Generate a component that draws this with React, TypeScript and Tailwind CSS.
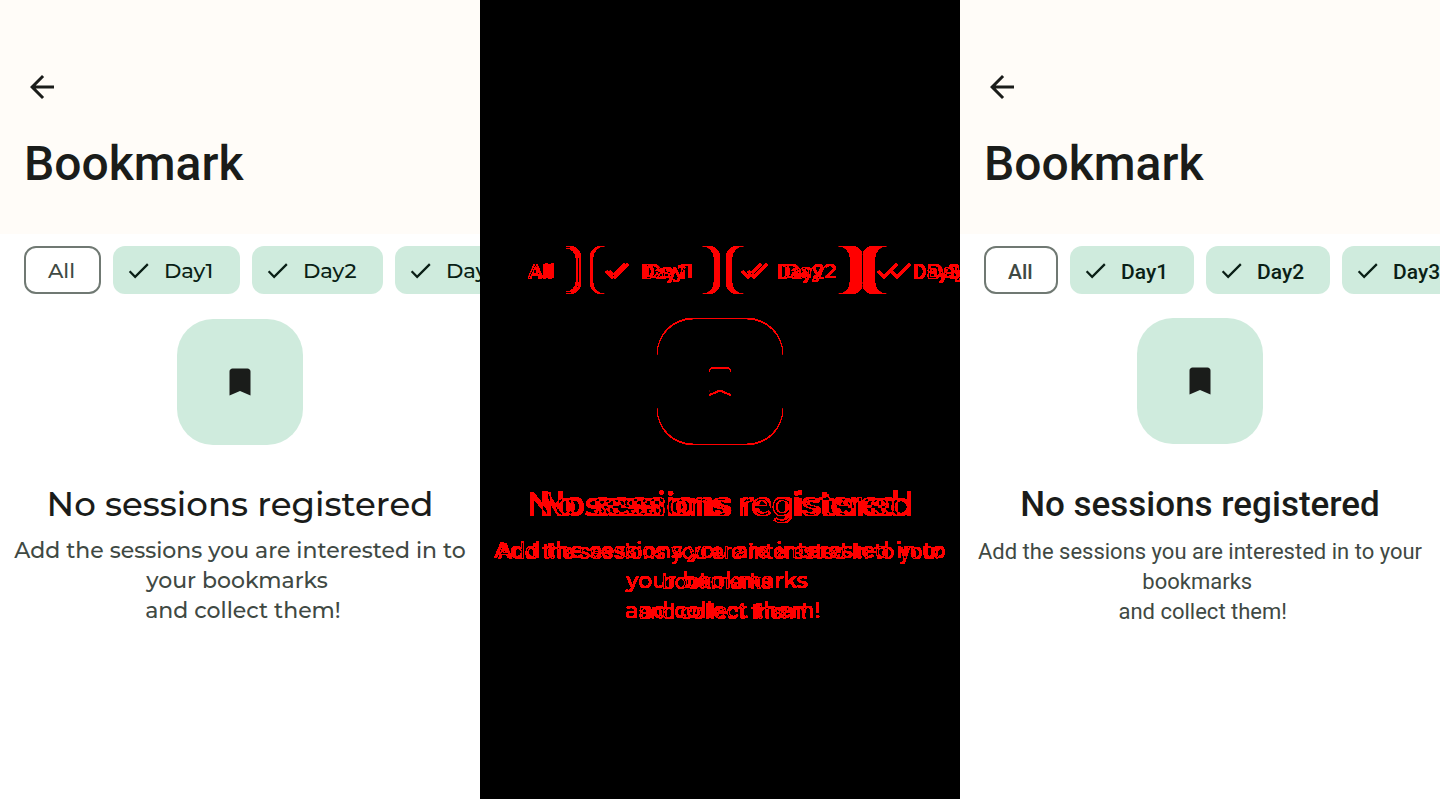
type Variant = "baseline" | "updated";

type ScreenStyle = {
  font: string;
  chipText: string;
  chipLabel: string;
  allChip: string;
  dayChips: string[];
  badgeMargin: string;
  heading: string;
  body: string;
  lines: string[];
};

const screens: Record<Variant, ScreenStyle> = {
  baseline: {
    font: "font-['Montserrat','Inter',sans-serif]",
    chipText: "text-[21px] font-medium",
    chipLabel: "pt-px",
    allChip: "min-w-[77px]",
    dayChips: ["min-w-[127px]", "min-w-[131px]", "min-w-[131px]"],
    badgeMargin: "mt-[25px] mb-[38px]",
    heading: "text-[34px] font-medium",
    body: "mt-[11px] text-[22px] font-medium",
    lines: ["Add the sessions you are interested in to", "your bookmarks ", " and collect them!"],
  },
  updated: {
    font: "font-['Roboto',sans-serif]",
    chipText: "text-[21px] font-medium",
    chipLabel: "pt-[5px]",
    allChip: "min-w-[74px]",
    dayChips: ["min-w-[124px]", "min-w-[124px]", "min-w-[124px]"],
    badgeMargin: "mt-[24px] mb-[40px]",
    heading: "text-[35px] font-medium",
    body: "mt-[11px] text-[22px]",
    lines: ["Add the sessions you are interested in to your", "bookmarks ", " and collect them!"],
  },
};

function BackIcon() {
  return (
    <svg viewBox="0 0 24 24" className="size-9" fill="currentColor" aria-hidden="true">
      <path d="M20 11H7.83l5.59-5.59L12 4l-8 8 8 8 1.41-1.41L7.83 13H20v-2z" />
    </svg>
  );
}

function CheckIcon() {
  return (
    <svg viewBox="0 0 24 24" className="size-[27px]" fill="currentColor" aria-hidden="true">
      <path d="M9 16.17L4.83 12l-1.42 1.41L9 19 21 7l-1.41-1.41z" />
    </svg>
  );
}

function BookmarkIcon() {
  return (
    <svg viewBox="0 0 24 24" className="size-9" fill="currentColor" aria-hidden="true">
      <path d="M17 3H7c-1.1 0-2 .9-2 2v16l7-3 7 3V5c0-1.1-.9-2-2-2z" />
    </svg>
  );
}

function BookmarkScreen({ variant }: { variant: Variant }) {
  const s = screens[variant];
  return (
    <div className={`flex min-w-0 flex-col overflow-hidden bg-white text-[#1a1c1a] ${s.font}`}>
      <header className="flex flex-col items-start bg-[#fffcf8] px-6 pt-[69px] pb-10 font-['Roboto',sans-serif]">
        <button type="button" aria-label="Back">
          <BackIcon />
        </button>
        <h1 className="mt-[29px] text-[48px] leading-[60px] font-medium">Bookmark</h1>
      </header>
      <div className={`flex gap-3 overflow-hidden pt-3 pl-6 ${s.chipText}`}>
        <button
          type="button"
          aria-pressed="false"
          className={`flex h-12 shrink-0 items-center rounded-xl border-2 border-[#707973] pl-[22px] text-[#404943] ${s.allChip}`}
        >
          <span className={s.chipLabel}>All</span>
        </button>
        {s.dayChips.map((width, i) => (
          <button
            key={i}
            type="button"
            aria-pressed="true"
            className={`flex h-12 shrink-0 items-center gap-3 rounded-xl bg-[#cfebdd] pl-3 text-[#0a1f16] ${width}`}
          >
            <CheckIcon />
            <span className={s.chipLabel}>{`Day${i + 1}`}</span>
          </button>
        ))}
      </div>
      <div className="flex flex-col items-center text-center">
        <div
          className={`flex size-[126px] items-center justify-center rounded-[36px] bg-[#cfebdd] ${s.badgeMargin}`}
        >
          <BookmarkIcon />
        </div>
        <h2 className={`leading-[42px] whitespace-nowrap ${s.heading}`}>No sessions registered</h2>
        <p className={`leading-[30px] text-[#404943] ${s.body}`}>
          {s.lines.map((line) => (
            <span key={line} className="block whitespace-pre">
              {line}
            </span>
          ))}
        </p>
      </div>
    </div>
  );
}

/* Blends the two screens and turns every differing pixel red. */
function DifferencePanel() {
  return (
    <div inert className="min-w-0 overflow-hidden bg-black">
      <svg width="0" height="0" className="absolute" aria-hidden="true">
        <filter id="mark-red" x="0" y="0" width="1" height="1" colorInterpolationFilters="sRGB">
          <feColorMatrix
            type="matrix"
            values="60 60 60 0 -0.4  0 0 0 0 0  0 0 0 0 0  0 0 0 0 1"
          />
        </filter>
      </svg>
      <div className="isolate grid h-full grid-cols-1 [filter:url(#mark-red)]">
        <div className="grid min-w-0 [grid-area:1/1]">
          <BookmarkScreen variant="baseline" />
        </div>
        <div className="grid min-w-0 mix-blend-difference [grid-area:1/1]">
          <BookmarkScreen variant="updated" />
        </div>
      </div>
    </div>
  );
}

export default function App() {
  return (
    <main className="grid min-h-screen grid-cols-3">
      <BookmarkScreen variant="baseline" />
      <DifferencePanel />
      <BookmarkScreen variant="updated" />
    </main>
  );
}
